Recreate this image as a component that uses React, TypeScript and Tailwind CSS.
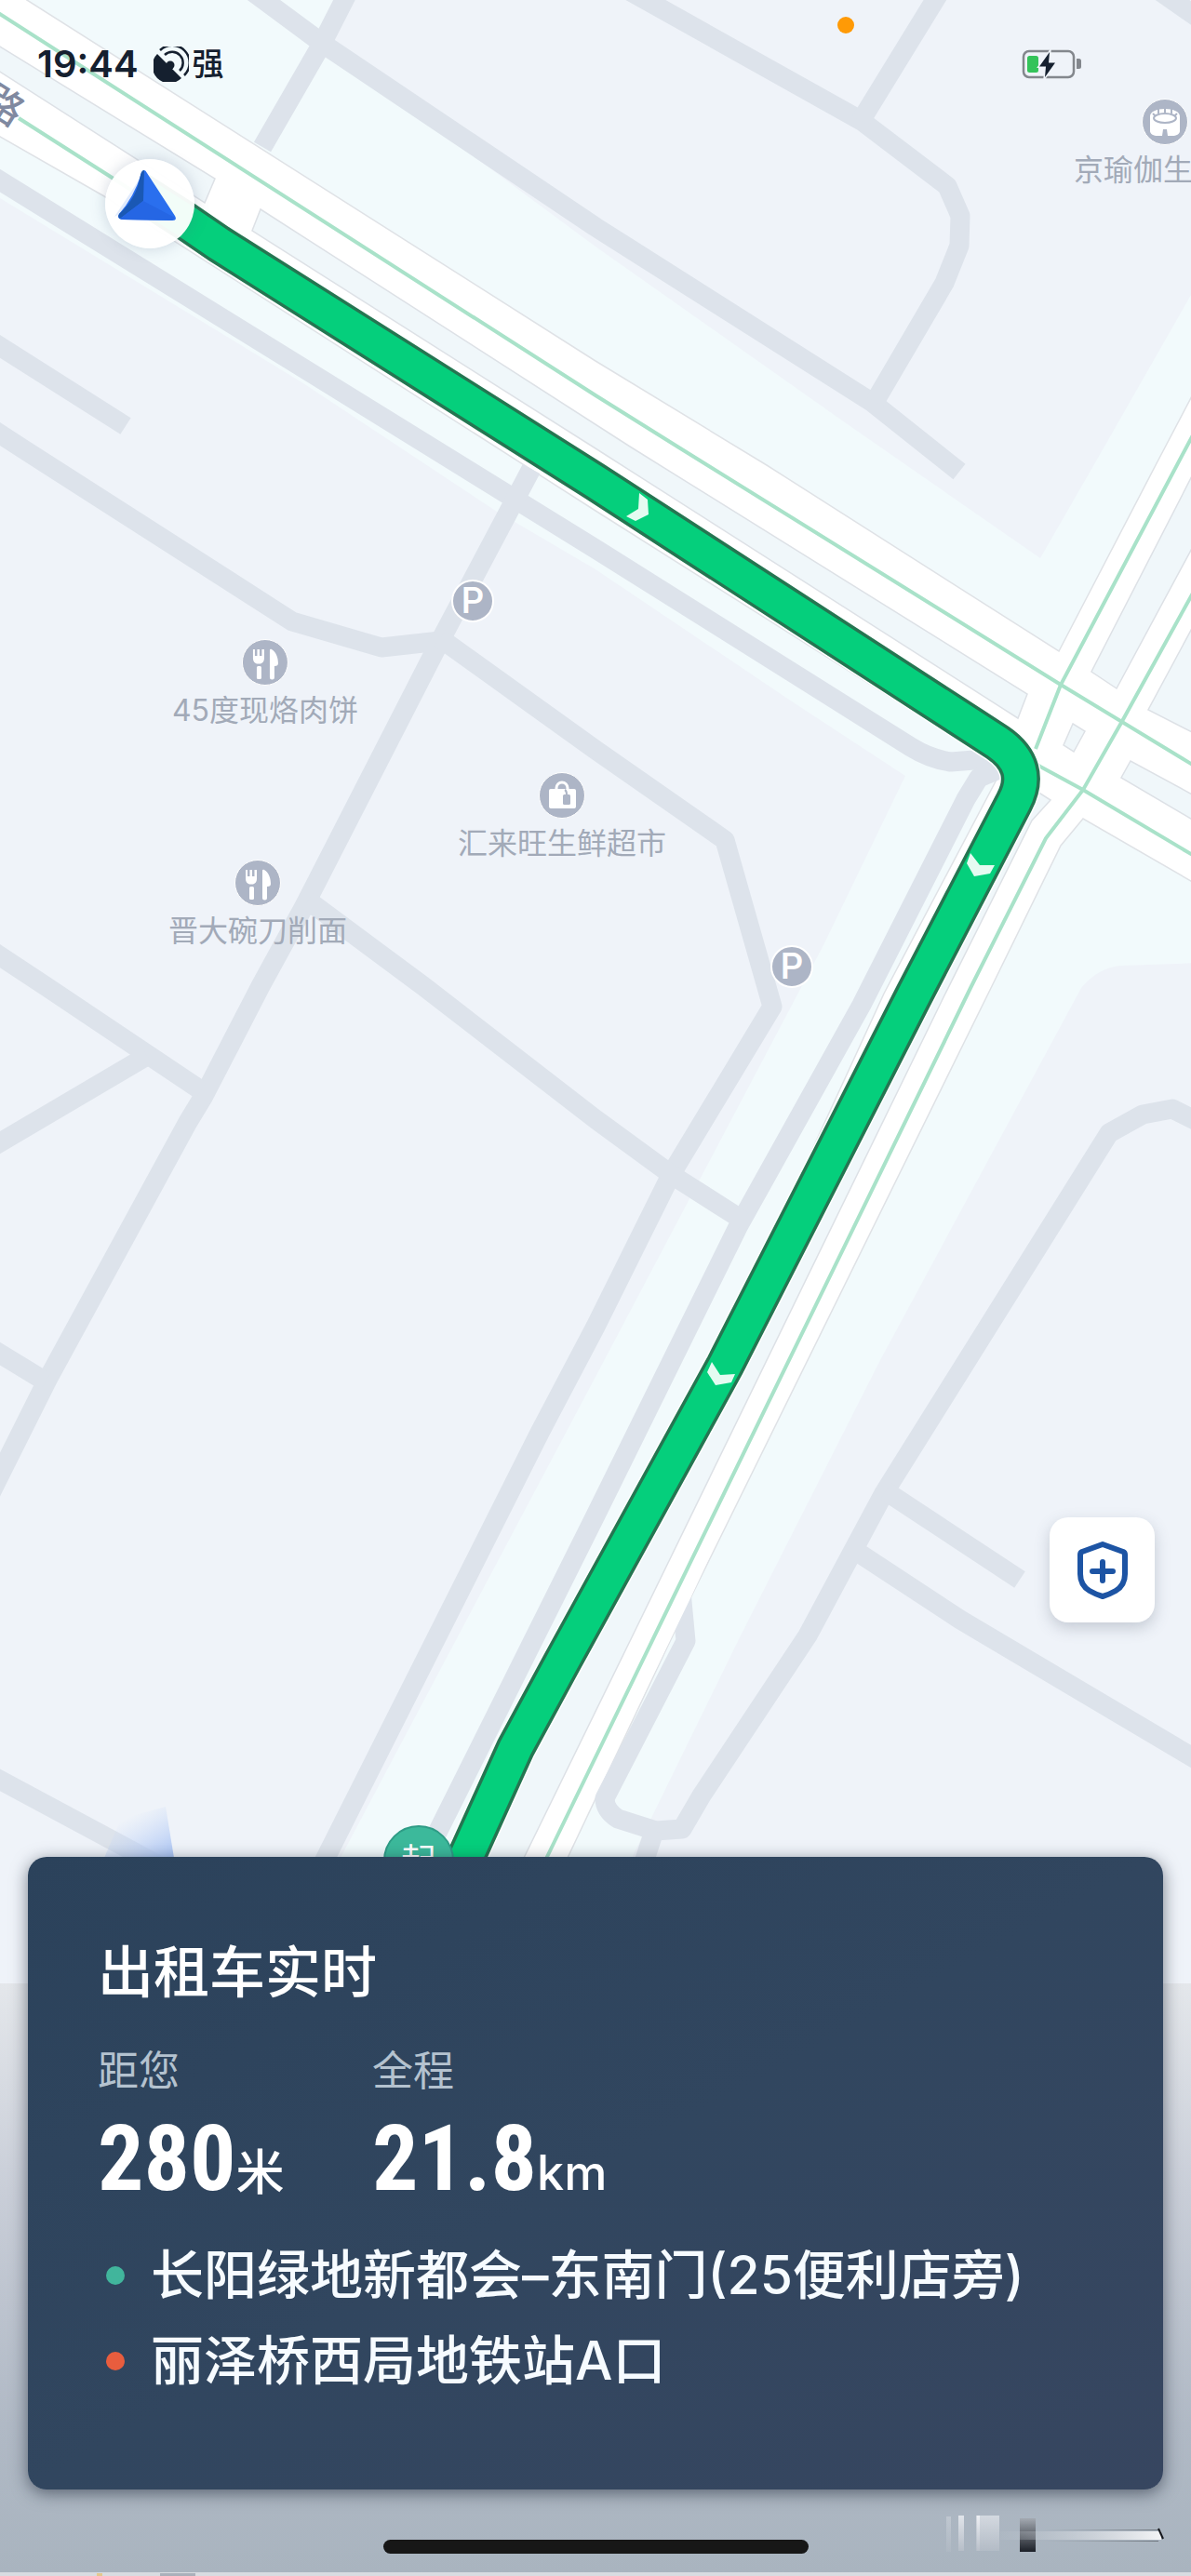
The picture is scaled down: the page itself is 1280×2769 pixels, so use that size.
import React from "react";

const CJK = "font-[Inter,'Noto_Sans_CJK_SC',sans-serif]";

/* ---------- map ---------- */

const streets = [
  "M270 -10 L347 47 L640 244 L938 433 L1031 507",
  "M375 -10 L346 47 L282 158",
  "M676 -10 L926 130 L1018 200 L1032 232 L1031 264 L1015 304 L940 432",
  "M1011 -10 L925 130",
  "M1240 -14 L1300 28",
  "M-10 188 L640 590 L979 803 Q1000 816 1022 819 L1072 815",
  "M1085 822 L1052 836 L1038 859 L926 1080 L793 1319 L640 1629 L450 2010",
  "M-10 366 L135 458",
  "M-10 460 L27 484 L314 668 L410 696 L473 689",
  "M571 504 L473 689 L327 974 L280 1060 L219 1178 L202 1206 L51 1483 L-20 1625",
  "M473 686 L640 806 L779 903 L830 1082 L722 1261 L640 1426 L580 1540 L346 2005",
  "M331 968 L455 1060 L640 1203 L722 1263 L799 1312",
  "M-10 1021 L49 1060 L216 1172",
  "M-10 1234 L158 1135",
  "M-10 1449 L49 1485",
  "M-10 1908 L180 2010",
  "M1290 1207 L1260 1192 L1228 1198 L1192 1218 L950 1605 L868 1758 L754 1930 L733 1966 L705 1968 L664 1955 Q650 1946 650 1933 L737 1764 L731 1700",
  "M703 1968 L692 2002",
  "M952 1603 L1096 1698",
  "M924 1670 L1032 1741 L1290 1894",
];

const medians = [
  "M-5 47 L231 192 L220 218 L-5 74 Z",
  "M280 225 L677 480 L1104 746 L1094 772 L640 482 L271 248 Z",
  "M1285 504 L1173 722 L1200 740 L1285 582 Z",
  "M1285 668 L1234 763 L1285 789 Z",
  "M1153 778 L1166 786 L1154 808 L1143 801 Z",
  "M1285 856 L1215 818 L1205 836 L1285 883 Z",
  "M1090 835 L1129 860 L1109 882 L1015 1070 L679 1760 L563 1997 L515 1997 L900 1200 Z",
];

const ROUTE =
  "M150 206 L200 238 L235 262 L640 518 L1072 798 Q1110 824 1090 862 L983 1068 L779 1468 L606 1783 L554 1879 L497 2005";

function MapCanvas() {
  return (
    <svg
      aria-hidden="true"
      viewBox="0 0 1280 2769"
      preserveAspectRatio="xMidYMin slice"
      className="absolute inset-0 h-full w-full"
    >
      <defs>
        <linearGradient id="beam" x1="0.1" y1="0" x2="0.9" y2="1">
          <stop offset="0.25" stopColor="#c6d8f8" stopOpacity="0" />
          <stop offset="1" stopColor="#adc6f4" />
        </linearGradient>
        <linearGradient id="shade" x1="0" y1="0" x2="0" y2="1">
          <stop offset="0" stopColor="#e4e7eb" />
          <stop offset="0.35" stopColor="#c9ced8" />
          <stop offset="0.75" stopColor="#b0b9c5" />
          <stop offset="1" stopColor="#a9b4bf" />
        </linearGradient>
      </defs>
      <rect width="1280" height="2769" fill="#f2fafc" />
      <g fill="#eff3f9">
        <path d="M376 0 L350 50 L640 265 L905 452 L1118 600 L1187 480 L1280 317 V0 Z" />
        <path d="M0 213 L326 412 L531 548 L640 612 L848 752 L973 834 L885 1016 L640 1480 L367 1995 V2769 H0 Z" />
        <path d="M1290 1035 L1205 1038 Q1180 1040 1162 1062 L946 1462 L795 1760 L680 1995 V2769 H1290 Z" />
      </g>
      <path
        d="M-5 -22 L29 0 L640 388 L824 500 L1138 700 L1242 500 L1285 418 L1285 950 L1164 880 L1140 909 L1066 1060 L742 1718 L610 1997 H480 L640 1690 L803 1388 L950 1068 L1071 838 L1064 817 L640 549 L112 211 L-5 144 Z"
        fill="#ffffff"
        stroke="#dfe2e6"
        strokeWidth="1.5"
      />
      <g fill="none" stroke="#dde3eb" strokeWidth="21" strokeLinejoin="round">
        {streets.map((d) => (
          <path key={d} d={d} />
        ))}
      </g>
      <path d="M769 1660 L742 1718 L607 1997 H563 L679 1760 L720 1670 Z" fill="#fff" />
      <g fill="#f0f7fa" stroke="#dde1e6" strokeWidth="1.5">
        {medians.map((d) => (
          <path key={d} d={d} />
        ))}
      </g>
      <g fill="none" stroke="#a9e2c9" strokeWidth="4">
        <path d="M-5 12 L640 425 L728 480 L1140 736 L1285 824" />
        <path d="M20 127 L122 192 L640 530 L1118 824 L1164 849 L1285 921" />
        <path d="M1285 462 L1140 736 L1113 805" />
        <path d="M1285 632 L1205 777 L1164 849 L1124 901 L1044 1060 L710 1745 L586 2000" />
      </g>
      <g fill="none" strokeLinejoin="round">
        <path d={ROUTE} stroke="#ffffff" strokeWidth="45" />
        <path d={ROUTE} stroke="#257551" strokeWidth="42" />
        <path d={ROUTE} stroke="#05cf7c" strokeWidth="35" />
      </g>
      <g fill="#e4fbf1">
        <path d="M687 530 L696 537 L697 553 L683 560 L673 555 L686 547 Z" />
        <path d="M1043 917 L1039 928 L1047 942 L1064 939 L1069 930 L1053 930 Z" />
        <path d="M765 1464 L760 1475 L769 1489 L786 1486 L790 1477 L774 1478 Z" />
      </g>
      <path d="M112 1997 L130 1955 L178 1942 L187 1997 Z" fill="url(#beam)" />
      <rect y="2132" width="1280" height="633" fill="url(#shade)" />
      <rect y="2765" width="1280" height="4" fill="#d8dce1" />
      <rect x="104" y="2766" width="6" height="3" fill="#e3c88e" />
      <rect x="172" y="2766" width="38" height="3" fill="#a9b0ba" />
    </svg>
  );
}

function VehicleMarker() {
  return (
    <div className="absolute left-[113px] top-[171px] h-24 w-24 rounded-full bg-white/95 shadow-[0_0_16px_rgba(80,100,130,0.25)]">
      <svg aria-label="车辆位置" viewBox="0 0 96 96" className="h-full w-full">
        <path d="M10 62 L38 20 L40 44 Z" fill="#e0eafc" />
        <path d="M39 15 Q42 9 45 15 L75 61 Q78 66 72 66 L18 65 Q12 64 15 59 Q31 41 39 15 Z" fill="#2a6fee" />
        <path d="M42 12 Q39 12 38 17 Q34 42 15 59 Q13 62 16 64 L41 45 Z" fill="#1a58b4" />
        <path d="M41 45 L16 64 L18 65 L72 66 L75 63 Z" fill="#2566e4" />
      </svg>
    </div>
  );
}

function FoodGlyph() {
  return (
    <svg aria-hidden="true" viewBox="0 0 48 48" className="h-12 w-12" fill="#fff">
      <path d="M11 10h2v7h2.500v-7h2.500v7h2.500v-7H23v10c0 3-2 5-4 5.500h-4c-2-.5-4-2.500-4-5.500z" />
      <rect x="15" y="28" width="5" height="14" rx="1.500" />
      <path d="M29 11c0-1 1-1.500 2-1 5 3 7 9 7 15 0 2-1 3-4 3v12a2.500 2.500 0 0 1-5 0z" />
    </svg>
  );
}

function BagGlyph() {
  return (
    <svg aria-hidden="true" viewBox="0 0 48 48" className="h-12 w-12">
      <path d="M18 18v-2a6 6 0 0 1 12 0v2" fill="none" stroke="#fff" strokeWidth="3" />
      <rect x="10" y="17" width="29" height="21" rx="2" fill="#fff" />
      <path d="M27 18c2 1 2 3 2 5" fill="none" stroke="#adb5c6" strokeWidth="2" />
      <rect x="25" y="23" width="8" height="11" rx="1.500" fill="#adb5c6" />
    </svg>
  );
}

function DrumGlyph() {
  return (
    <svg aria-hidden="true" viewBox="0 0 48 48" className="h-12 w-12">
      <path d="M8 18c0-5 7-8 16-8s16 3 16 8v16c0 3-4 5-8 5h-5l-1-7h-4l-1 7h-5c-4 0-8-2-8-5z" fill="#fff" />
      <ellipse cx="24" cy="20" rx="12" ry="5" fill="#fff" stroke="#adb5c6" strokeWidth="2" />
      <path d="M17 10v5M24 9v5M31 10v5M11 15l3 3M37 15l-3 3" stroke="#adb5c6" strokeWidth="2" />
    </svg>
  );
}

const pinDisc = "h-[50px] w-[50px] rounded-full border border-white bg-[#adb5c6]";
const pinLabel = `whitespace-nowrap text-[32px] leading-[48px] text-[#a2aab8] ${CJK}`;

type PoiProps = { className: string; name: string; children: React.ReactNode };

function Poi({ className, name, children }: PoiProps) {
  return (
    <div className={`absolute flex -translate-x-1/2 flex-col items-center gap-[3px] ${className}`}>
      <span className={pinDisc}>{children}</span>
      <span className={pinLabel}>{name}</span>
    </div>
  );
}

function Parking({ className }: { className: string }) {
  return (
    <span
      className={`absolute flex h-[46px] w-[46px] items-center justify-center rounded-full border-2 border-white bg-[#adb5c6] font-[Roboto,sans-serif] text-[38px] font-medium leading-none text-white ${className}`}
    >
      P
    </span>
  );
}

/* ---------- status bar ---------- */

function SignalIcon() {
  return (
    <svg aria-hidden="true" viewBox="0 0 38 38" className="h-[38px] w-[38px]">
      <path d="M4 8 L30 34 A17.500 17.500 0 0 1 4 8 Z" fill="#15202f" />
      <circle cx="18" cy="20" r="4.500" fill="#15202f" />
      <g fill="none" stroke="#15202f" strokeWidth="2.500">
        <path d="M7 4 A17 17 0 0 1 33 31" />
        <path d="M12 9 A11.500 11.500 0 0 1 28 26" />
      </g>
    </svg>
  );
}

function BatteryIcon() {
  return (
    <svg aria-label="电池充电中" viewBox="0 0 66 32" className="h-8 w-[66px]">
      <rect x="2" y="2" width="54" height="28" rx="6" fill="none" stroke="#83878d" strokeWidth="2.500" />
      <path d="M59 10h2.500q2.500 0 2.500 2.500v6q0 2.500-2.500 2.500H59z" fill="#83878d" />
      <rect x="6" y="7" width="12" height="18" rx="2.500" fill="#34c35a" />
      <path
        d="M30 3 L19 18.500 H26 L25 30 L36 14.500 H29 Z"
        fill="#15202f"
        stroke="#eff3f9"
        strokeWidth="3"
        paintOrder="stroke"
      />
    </svg>
  );
}

function StatusBar() {
  return (
    <header className="relative flex items-center justify-between pl-10 pr-[116px] pt-[45px]">
      <div className={`flex items-center text-[#15202f] ${CJK}`}>
        <time className="text-[40px] font-semibold leading-[48px]">19:44</time>
        <span className="ml-4">
          <SignalIcon />
        </span>
        <span className="ml-1 text-[34px] font-medium leading-[48px]">强</span>
      </div>
      <BatteryIcon />
      <span className="absolute left-[900px] top-[18px] h-[18px] w-[18px] rounded-full bg-[#ff9a06]" />
    </header>
  );
}

/* ---------- trip card ---------- */

function Metric({ label, value, unit }: { label: string; value: string; unit: string }) {
  return (
    <div>
      <dt className="text-[44px] leading-[60px] text-[#b4c2cf]">{label}</dt>
      <dd className="flex items-baseline text-white">
        <span className="font-['Roboto_Condensed','Open_Sans_Condensed','Noto_Sans_Condensed',Roboto,sans-serif] text-[98px] font-bold leading-[130px]">
          {value}
        </span>
        <span className="text-[52px] font-medium leading-[60px]">{unit}</span>
      </dd>
    </div>
  );
}

function Stop({ dot, name }: { dot: string; name: string }) {
  return (
    <li className="flex items-center gap-7 pl-[9px] text-[57px] font-medium leading-[92px] text-[#f6fbff]">
      <span className={`h-5 w-5 shrink-0 rounded-full ${dot}`} />
      <span>{name}</span>
    </li>
  );
}

function TripCard() {
  return (
    <section
      className={`relative mx-[30px] rounded-[20px] bg-linear-to-br from-[#2b425b] via-[#31465f] to-[#374660] pb-[92px] pl-[75px] pr-8 pt-[88px] shadow-[0_4px_18px_rgba(20,30,45,0.55)] ${CJK}`}
    >
      <h1 className="text-[60px] font-medium leading-[72px] text-white">出租车实时</h1>
      <dl className="mt-10 grid grid-cols-[295px_auto] justify-start">
        <Metric label="距您" value="280" unit="米" />
        <Metric label="全程" value="21.8" unit="km" />
      </dl>
      <ul className="mt-[14px]">
        <Stop dot="bg-[#41b59c]" name="长阳绿地新都会–东南门(25便利店旁)" />
        <Stop dot="bg-[#e85d3e]" name="丽泽桥西局地铁站A口" />
      </ul>
    </section>
  );
}

function CornerMark() {
  return (
    <svg aria-hidden="true" viewBox="0 0 240 40" className="absolute right-[28px] top-[28px] h-10 w-[240px]">
      <defs>
        <linearGradient id="fade" x1="0" y1="0" x2="0" y2="1">
          <stop offset="0" stopColor="#eef0f4" />
          <stop offset="1" stopColor="#b9c0ca" />
        </linearGradient>
        <linearGradient id="dark" x1="0" y1="0" x2="0" y2="1">
          <stop offset="0" stopColor="#a3a9b1" />
          <stop offset="1" stopColor="#1c2028" />
        </linearGradient>
        <linearGradient id="pin" x1="0" y1="0" x2="1" y2="0">
          <stop offset="0" stopColor="#c4cbd3" stopOpacity="0.1" />
          <stop offset="1" stopColor="#f3f4f6" />
        </linearGradient>
        <linearGradient id="edge" gradientUnits="userSpaceOnUse" x1="110" y1="0" x2="236" y2="0">
          <stop offset="0" stopColor="#8e959d" stopOpacity="0" />
          <stop offset="1" stopColor="#6f767e" />
        </linearGradient>
      </defs>
      <rect x="5" y="1" width="5" height="38" fill="url(#fade)" opacity="0.3" />
      <rect x="18" y="0" width="6" height="38" fill="url(#fade)" opacity="0.8" />
      <rect x="37" y="0" width="25" height="38" fill="url(#fade)" opacity="0.6" />
      <rect x="38" y="0" width="3" height="38" fill="url(#fade)" />
      <rect x="84" y="3" width="17" height="36" fill="url(#dark)" />
      <rect x="63" y="17" width="173" height="9" fill="url(#pin)" />
      <path d="M110 15 H233 V16 H110 Z M110 27 H233 V28 H110 Z" fill="url(#edge)" />
      <path d="M233 14 L238 25" stroke="#14171c" strokeWidth="2" />
    </svg>
  );
}

export default function App() {
  return (
    <main className="relative flex min-h-screen flex-col overflow-hidden bg-[#eff3f9]">
      <MapCanvas />

      <svg aria-label="路" viewBox="0 0 60 80" className="absolute left-0 top-[70px] h-20 w-[60px] overflow-visible">
        <text
          textAnchor="middle"
          transform="translate(-4 56) rotate(32)"
          fontSize="42"
          fill="#8089a0"
          className="font-['Noto_Sans_CJK_SC',sans-serif] font-medium"
        >
          路
        </text>
      </svg>

      <Poi className="left-[285px] top-[687px]" name="45度现烙肉饼">
        <FoodGlyph />
      </Poi>
      <Poi className="left-[277px] top-[924px]" name="晋大碗刀削面">
        <FoodGlyph />
      </Poi>
      <Poi className="left-[604px] top-[830px]" name="汇来旺生鲜超市">
        <BagGlyph />
      </Poi>
      <div className="absolute left-[1154px] top-[106px] flex flex-col gap-[3px]">
        <span className={`ml-[73px] ${pinDisc}`}>
          <DrumGlyph />
        </span>
        <span className={pinLabel}>京瑜伽生</span>
      </div>
      <Parking className="left-[485px] top-[623px]" />
      <Parking className="left-[828px] top-[1016px]" />
      <VehicleMarker />

      <span className={`absolute left-[412px] top-[1962px] flex h-[76px] w-[76px] items-center justify-center rounded-full border-2 border-[#2f9c86] bg-[#3cb99b] text-[38px] text-white ${CJK}`}>
        起
      </span>

      <StatusBar />

      <button
        type="button"
        aria-label="安全中心"
        className="relative mb-[252px] mr-[39px] mt-auto flex h-[113px] w-[113px] items-center justify-center self-end rounded-[20px] bg-white shadow-[0_6px_16px_rgba(70,85,105,0.25)]"
      >
        <svg aria-hidden="true" viewBox="0 0 56 64" className="h-16 w-14" fill="none" stroke="#1d54a4" strokeWidth="6" strokeLinejoin="round" strokeLinecap="round">
          <path d="M28 4 L50 12 Q52 13 52 15 V36 Q52 48 42 54 Q35 58 28 60 Q21 58 14 54 Q4 48 4 36 V15 Q4 13 6 12 Z" />
          <path d="M28 23 V43 M17 33 H39" />
        </svg>
      </button>

      <TripCard />

      <footer className="relative flex h-[93px] justify-center pt-[54px]">
        <span className="h-[15px] w-[457px] rounded-full bg-[#171717]" />
        <CornerMark />
      </footer>
    </main>
  );
}
